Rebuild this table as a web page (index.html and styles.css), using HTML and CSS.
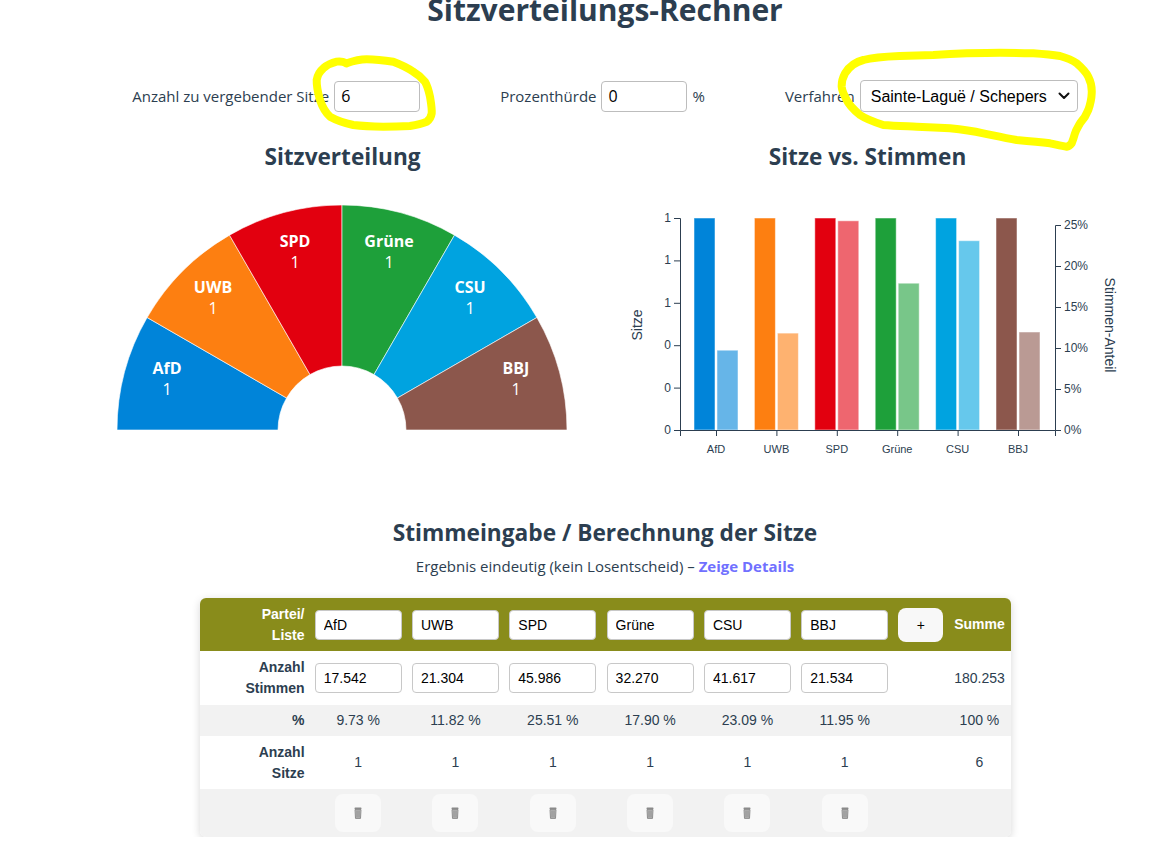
FILE: index.html
```html
<!DOCTYPE html>
<html lang="de">
<head>
<meta charset="utf-8">
<title>Sitzverteilungs-Rechner</title>
<link rel="stylesheet" href="styles.css">
</head>
<body>
<div class="page">
  <div class="app">
    <h1 class="title">Sitzverteilungs-Rechner</h1>

    <div class="controls">
      <label class="ctrl"><span>Anzahl zu vergebender Sitze</span><input class="num" value="6"></label>
      <label class="ctrl"><span>Prozenthürde</span><input class="num" value="0"><span class="pct">%</span></label>
      <label class="ctrl"><span>Verfahren</span>
        <span class="select-wrap">
          <select class="sel"><option>Sainte-Laguë / Schepers</option></select>
          <svg class="chev" width="12" height="8" viewBox="0 0 12 8"><path d="M1.5 1.5 L6 6 L10.5 1.5" fill="none" stroke="#111" stroke-width="2" stroke-linecap="round" stroke-linejoin="round"/></svg>
        </span>
      </label>
    </div>

    <div class="charts">
      <section class="chart">
        <h2 class="chart-title">Sitzverteilung</h2>
        <svg class="pie" width="525" height="260" viewBox="0 0 525 260">
          <g stroke="#ffffff" stroke-opacity="0.6" stroke-width="1">
            <path fill="#0084d9" d="M37 245 A225 225 0 0 1 67.14 132.5 L206.57 213 A64 64 0 0 0 198 245 Z"/>
            <path fill="#fd7f11" d="M67.14 132.5 A225 225 0 0 1 149.5 50.14 L230 189.57 A64 64 0 0 0 206.57 213 Z"/>
            <path fill="#e2000f" d="M149.5 50.14 A225 225 0 0 1 262 20 L262 181 A64 64 0 0 0 230 189.57 Z"/>
            <path fill="#1ea03a" d="M262 20 A225 225 0 0 1 374.5 50.14 L294 189.57 A64 64 0 0 0 262 181 Z"/>
            <path fill="#00a3e0" d="M374.5 50.14 A225 225 0 0 1 456.86 132.5 L317.43 213 A64 64 0 0 0 294 189.57 Z"/>
            <path fill="#8c574c" d="M456.86 132.5 A225 225 0 0 1 487 245 L326 245 A64 64 0 0 0 317.43 213 Z"/>
          </g>
          <g class="pie-lbl" text-anchor="middle" fill="#ffffff">
            <text x="87" y="189" class="pn">AfD</text><text x="87" y="210" class="pv">1</text>
            <text x="133" y="108" class="pn">UWB</text><text x="133" y="129" class="pv">1</text>
            <text x="215" y="62" class="pn">SPD</text><text x="215" y="83" class="pv">1</text>
            <text x="309" y="62" class="pn">Grüne</text><text x="309" y="83" class="pv">1</text>
            <text x="390" y="108" class="pn">CSU</text><text x="390" y="129" class="pv">1</text>
            <text x="436" y="189" class="pn">BBJ</text><text x="436" y="210" class="pv">1</text>
          </g>
        </svg>
      </section>

      <section class="chart">
        <h2 class="chart-title">Sitze vs. Stimmen</h2>
        <svg class="bars" width="525" height="285" viewBox="0 0 525 285">
          <g stroke="#ffffff" stroke-opacity="0.5" stroke-width="1">
            <rect x="89" y="33" width="21" height="212" fill="#0084d9"/>
            <rect x="112" y="165.2" width="21" height="79.8" fill="#0084d9" fill-opacity="0.6"/>
            <rect x="149.4" y="33" width="21" height="212" fill="#fd7f11"/>
            <rect x="172.4" y="148.1" width="21" height="96.9" fill="#fd7f11" fill-opacity="0.6"/>
            <rect x="209.8" y="33" width="21" height="212" fill="#e2000f"/>
            <rect x="232.8" y="35.8" width="21" height="209.2" fill="#e2000f" fill-opacity="0.6"/>
            <rect x="270.2" y="33" width="21" height="212" fill="#1ea03a"/>
            <rect x="293.2" y="98.2" width="21" height="146.8" fill="#1ea03a" fill-opacity="0.6"/>
            <rect x="330.6" y="33" width="21" height="212" fill="#00a3e0"/>
            <rect x="353.6" y="55.7" width="21" height="189.3" fill="#00a3e0" fill-opacity="0.6"/>
            <rect x="391" y="33" width="21" height="212" fill="#8c574c"/>
            <rect x="414" y="147" width="21" height="98" fill="#8c574c" fill-opacity="0.6"/>
          </g>
          <g class="axis" fill="none" stroke="#2c3e50" stroke-width="1">
            <path d="M69 33.5 H75.5 V245.5 H69"/>
            <path d="M69 203.1 H75.5 M69 160.7 H75.5 M69 118.3 H75.5 M69 75.9 H75.5"/>
            <path d="M456 40.5 H450.5 V245.5 H456"/>
            <path d="M450.5 204.5 H456 M450.5 163.5 H456 M450.5 122.5 H456 M450.5 81.5 H456"/>
            <path d="M75.5 251 V245.5 H450.5 V251"/>
            <path d="M111.5 245.5 V251 M171.9 245.5 V251 M232.3 245.5 V251 M292.7 245.5 V251 M353.1 245.5 V251 M413.5 245.5 V251"/>
          </g>
          <g class="tick" text-anchor="end" fill="#2c3e50">
            <text x="66" y="249">0</text>
            <text x="66" y="207">0</text>
            <text x="66" y="164">0</text>
            <text x="66" y="122">1</text>
            <text x="66" y="79">1</text>
            <text x="66" y="37">1</text>
          </g>
          <g class="tick" text-anchor="start" fill="#2c3e50">
            <text x="459" y="249">0%</text>
            <text x="459" y="208">5%</text>
            <text x="459" y="167">10%</text>
            <text x="459" y="126">15%</text>
            <text x="459" y="85">20%</text>
            <text x="459" y="44">25%</text>
          </g>
          <g class="cat" text-anchor="middle" fill="#2c3e50">
            <text x="111" y="268">AfD</text>
            <text x="171.4" y="268">UWB</text>
            <text x="231.8" y="268">SPD</text>
            <text x="292.2" y="268">Grüne</text>
            <text x="352.6" y="268">CSU</text>
            <text x="413" y="268">BBJ</text>
          </g>
          <text class="ax-lbl" text-anchor="middle" fill="#2c3e50" transform="translate(37 140) rotate(-90)">Sitze</text>
          <text class="ax-lbl" text-anchor="middle" fill="#2c3e50" transform="translate(500 140) rotate(90)">Stimmen-Anteil</text>
        </svg>
      </section>
    </div>

    <h2 class="section-title">Stimmeingabe / Berechnung der Sitze</h2>
    <p class="result">Ergebnis eindeutig (kein Losentscheid) – <a class="details" href="#">Zeige Details</a></p>

    <div class="table-wrap">
      <table class="votes">
        <colgroup>
          <col class="c-label"><col class="c-party"><col class="c-party"><col class="c-party"><col class="c-party"><col class="c-party"><col class="c-party"><col class="c-add"><col class="c-sum">
        </colgroup>
        <tr class="r-head">
          <th class="lbl">Partei/<br>Liste</th>
          <td><input class="cell-in" value="AfD"></td>
          <td><input class="cell-in" value="UWB"></td>
          <td><input class="cell-in" value="SPD"></td>
          <td><input class="cell-in" value="Grüne"></td>
          <td><input class="cell-in" value="CSU"></td>
          <td><input class="cell-in" value="BBJ"></td>
          <td><button class="add">+</button></td>
          <th class="sum">Summe</th>
        </tr>
        <tr class="r-votes">
          <th class="lbl">Anzahl<br>Stimmen</th>
          <td><input class="cell-in" value="17.542"></td>
          <td><input class="cell-in" value="21.304"></td>
          <td><input class="cell-in" value="45.986"></td>
          <td><input class="cell-in" value="32.270"></td>
          <td><input class="cell-in" value="41.617"></td>
          <td><input class="cell-in" value="21.534"></td>
          <td></td>
          <td class="sum">180.253</td>
        </tr>
        <tr class="r-pct">
          <th class="lbl">%</th>
          <td>9.73 %</td><td>11.82 %</td><td>25.51 %</td><td>17.90 %</td><td>23.09 %</td><td>11.95 %</td>
          <td></td>
          <td class="sum">100 %</td>
        </tr>
        <tr class="r-seats">
          <th class="lbl">Anzahl<br>Sitze</th>
          <td>1</td><td>1</td><td>1</td><td>1</td><td>1</td><td>1</td>
          <td></td>
          <td class="sum">6</td>
        </tr>
        <tr class="r-del">
          <th class="lbl"></th>
          <td><button class="del"><svg width="8" height="12" viewBox="0 0 8 12"><rect x="0.5" y="0.5" width="7" height="1.8" rx="0.7" fill="#8a8a8a"/><path d="M1 2.6 H7 L6.5 11.4 H1.5 Z" fill="#c4c4c4" stroke="#7a7a7a" stroke-width="0.8"/><path d="M3 3.4 V10.6 M5 3.4 V10.6" stroke="#707070" stroke-width="0.8"/></svg></button></td>
          <td><button class="del"><svg width="8" height="12" viewBox="0 0 8 12"><rect x="0.5" y="0.5" width="7" height="1.8" rx="0.7" fill="#8a8a8a"/><path d="M1 2.6 H7 L6.5 11.4 H1.5 Z" fill="#c4c4c4" stroke="#7a7a7a" stroke-width="0.8"/><path d="M3 3.4 V10.6 M5 3.4 V10.6" stroke="#707070" stroke-width="0.8"/></svg></button></td>
          <td><button class="del"><svg width="8" height="12" viewBox="0 0 8 12"><rect x="0.5" y="0.5" width="7" height="1.8" rx="0.7" fill="#8a8a8a"/><path d="M1 2.6 H7 L6.5 11.4 H1.5 Z" fill="#c4c4c4" stroke="#7a7a7a" stroke-width="0.8"/><path d="M3 3.4 V10.6 M5 3.4 V10.6" stroke="#707070" stroke-width="0.8"/></svg></button></td>
          <td><button class="del"><svg width="8" height="12" viewBox="0 0 8 12"><rect x="0.5" y="0.5" width="7" height="1.8" rx="0.7" fill="#8a8a8a"/><path d="M1 2.6 H7 L6.5 11.4 H1.5 Z" fill="#c4c4c4" stroke="#7a7a7a" stroke-width="0.8"/><path d="M3 3.4 V10.6 M5 3.4 V10.6" stroke="#707070" stroke-width="0.8"/></svg></button></td>
          <td><button class="del"><svg width="8" height="12" viewBox="0 0 8 12"><rect x="0.5" y="0.5" width="7" height="1.8" rx="0.7" fill="#8a8a8a"/><path d="M1 2.6 H7 L6.5 11.4 H1.5 Z" fill="#c4c4c4" stroke="#7a7a7a" stroke-width="0.8"/><path d="M3 3.4 V10.6 M5 3.4 V10.6" stroke="#707070" stroke-width="0.8"/></svg></button></td>
          <td><button class="del"><svg width="8" height="12" viewBox="0 0 8 12"><rect x="0.5" y="0.5" width="7" height="1.8" rx="0.7" fill="#8a8a8a"/><path d="M1 2.6 H7 L6.5 11.4 H1.5 Z" fill="#c4c4c4" stroke="#7a7a7a" stroke-width="0.8"/><path d="M3 3.4 V10.6 M5 3.4 V10.6" stroke="#707070" stroke-width="0.8"/></svg></button></td>
          <td></td>
          <td></td>
        </tr>
      </table>
    </div>
  </div>
</div>

<svg class="annot" width="1169" height="160" viewBox="0 0 1169 160">
  <path d="M346.7 63.3 C356 60 360 59.3 366.7 59.3 C378 59.5 385 60.5 393.3 61.7 C402 65 408 68 413.3 71.7 C419 75 422 78 425 81.7 C428 87 429 92 430 96.7 C431 103 432 108 431.7 113.3 C431 118 429 120 426.7 121.7 C421 124 416 125 410 126 C400 126.5 392 126.7 383.3 126.7 C372 126.5 362 126 353.3 125 C344 123 336 120 330 116.7 C325 112 322 106 320 100 C318 93 316.5 86 316.7 80 C317.5 75 320 71 323.3 68.3 C327 65 331 63 336.7 61.7 C340 61 343 61.5 346.7 63.3" fill="none" stroke="#ffff00" stroke-width="8" stroke-linecap="round" stroke-linejoin="round"/>
  <path d="M863.3 60 C875 57 888 56.5 900 56 C912 55.5 922 55.2 933.3 55 C945 54.3 955 53.8 966.7 53.3 C978 53 990 52.7 1000 52.7 C1012 52.8 1022 53 1033.3 53.3 C1043 54 1052 54.8 1060 56 C1067 58 1072 60 1076.7 63.3 C1082 68 1086 72 1088.3 76.7 C1091 82 1092 88 1091.7 93.3 C1091.5 100 1090 105 1088.3 110 C1086 116 1083 120 1080 123.3 C1078 127 1076 130 1075 133.3 C1074 137 1073 140 1071.7 143.3 C1070 145.5 1068.5 146.5 1066.7 146.7 C1061 146 1056 144.5 1050 143.3 C1039 142 1028 141 1016.7 140 C1005 138 994 135.5 983.3 133.3 C972 131 961 129.5 950 128.3 C939 127.5 928 127 916.7 126.7 C905 126.2 894 126 883.3 125 C874 122 866 119 860 115 C854 110 849 105 846.7 100 C844 95 842 91 841.7 86.7 C841.5 82 843 77 845 73.3 C849 67 855 62 863.3 60" fill="none" stroke="#ffff00" stroke-width="8" stroke-linecap="round" stroke-linejoin="round"/>
</svg>
</body>
</html>
```

FILE: styles.css
```css
* { box-sizing: border-box; }

body {
  margin: 0;
  position: relative;
  background: #ffffff;
  color: #2c3e50;
  font-family: "Open Sans", "Noto Sans", sans-serif;
}

.page { padding-left: 41px; }

.app {
  width: 1050px;
  margin: 0 auto;
}

.title {
  margin: -10px 0 0;
  font-size: 30px;
  line-height: 40px;
  font-weight: 700;
  text-align: center;
}

.controls {
  display: flex;
  justify-content: center;
  align-items: center;
  gap: 80px;
  margin-top: 50px;
  height: 32px;
  font-size: 15px;
}

.ctrl {
  display: flex;
  align-items: center;
  gap: 5px;
}

.num {
  width: 86px;
  height: 31px;
  border: 1px solid #bdbdbd;
  border-radius: 4px;
  padding: 0 6px;
  font-family: "Open Sans", sans-serif;
  font-size: 16px;
  color: #000;
  background: #fff;
}

.select-wrap {
  position: relative;
  display: inline-block;
}

.sel {
  -webkit-appearance: none;
  appearance: none;
  width: 218px;
  height: 32px;
  border: 1px solid #bdbdbd;
  border-radius: 4px;
  padding: 0 30px 0 10px;
  background: #fff;
  color: #000;
  font-family: "Liberation Sans", Arial, sans-serif;
  font-size: 16px;
}

.chev {
  position: absolute;
  right: 8px;
  top: 12px;
}

.charts {
  display: grid;
  grid-template-columns: 525px 525px;
  margin-top: 28px;
}

.chart-title {
  margin: 0;
  font-size: 22.6px;
  line-height: 34px;
  font-weight: 700;
  text-align: center;
}

.chart svg {
  display: block;
  margin-top: 11px;
}

.pn {
  font-family: "Open Sans", sans-serif;
  font-size: 16px;
  font-weight: 700;
}

.pv {
  font-family: "Open Sans", sans-serif;
  font-size: 16px;
}

.tick {
  font-family: "Liberation Sans", Arial, sans-serif;
  font-size: 12px;
}

.cat {
  font-family: "Liberation Sans", Arial, sans-serif;
  font-size: 11px;
}

.ax-lbl {
  font-family: "Liberation Sans", Arial, sans-serif;
  font-size: 14px;
}

.section-title {
  margin: 46px 0 0;
  font-size: 22.7px;
  line-height: 34px;
  font-weight: 700;
  text-align: center;
}

.result {
  margin: 5px 0 0;
  font-size: 15px;
  line-height: 22px;
  text-align: center;
}

.details {
  color: #7070ff;
  font-weight: 700;
  text-decoration: none;
}

.table-wrap {
  width: 811px;
  margin: 21px auto 0;
  border-radius: 6px;
  overflow: hidden;
  box-shadow: 0 2px 8px rgba(0, 0, 0, 0.16);
}

.votes {
  width: 811px;
  border-collapse: collapse;
  table-layout: fixed;
  font-family: "Liberation Sans", Arial, sans-serif;
  font-size: 14px;
  line-height: 21px;
  color: #2c3e50;
}

.c-label { width: 110px; }
.c-party { width: 97.3px; }
.c-add { width: 55px; }
.c-sum { width: 62px; }

.votes th, .votes td {
  padding: 0 5px;
  vertical-align: middle;
  text-align: center;
  font-weight: 400;
}

.votes th.lbl {
  text-align: right;
  font-weight: 700;
}

.r-head { height: 53px; background: #898c1b; }
.r-head th { color: #ffffff; font-weight: 700; }
.r-votes { height: 54px; background: #ffffff; }
.r-pct { height: 31px; background: #f2f2f2; }
.r-seats { height: 53px; background: #ffffff; }
.r-del { height: 48px; background: #f2f2f2; }

.votes th.sum { font-weight: 700; color: #ffffff; }

.cell-in {
  display: block;
  width: 87px;
  height: 30px;
  margin: 0 auto;
  border: 1px solid #c8c8c8;
  border-radius: 4px;
  padding: 0 8px;
  background: #fff;
  color: #000;
  font-family: "Liberation Sans", Arial, sans-serif;
  font-size: 14px;
}

.add {
  display: block;
  width: 45px;
  height: 34px;
  margin: 0 auto;
  border: none;
  border-radius: 8px;
  background: #f8f8f8;
  color: #000;
  font-family: "Liberation Sans", Arial, sans-serif;
  font-size: 14px;
}

.del {
  display: flex;
  align-items: center;
  justify-content: center;
  width: 46px;
  height: 38px;
  margin: 0 auto;
  border: none;
  border-radius: 8px;
  background: #f9f9f9;
  padding: 0;
}

.annot {
  position: absolute;
  top: 0;
  left: 0;
  pointer-events: none;
}
```
